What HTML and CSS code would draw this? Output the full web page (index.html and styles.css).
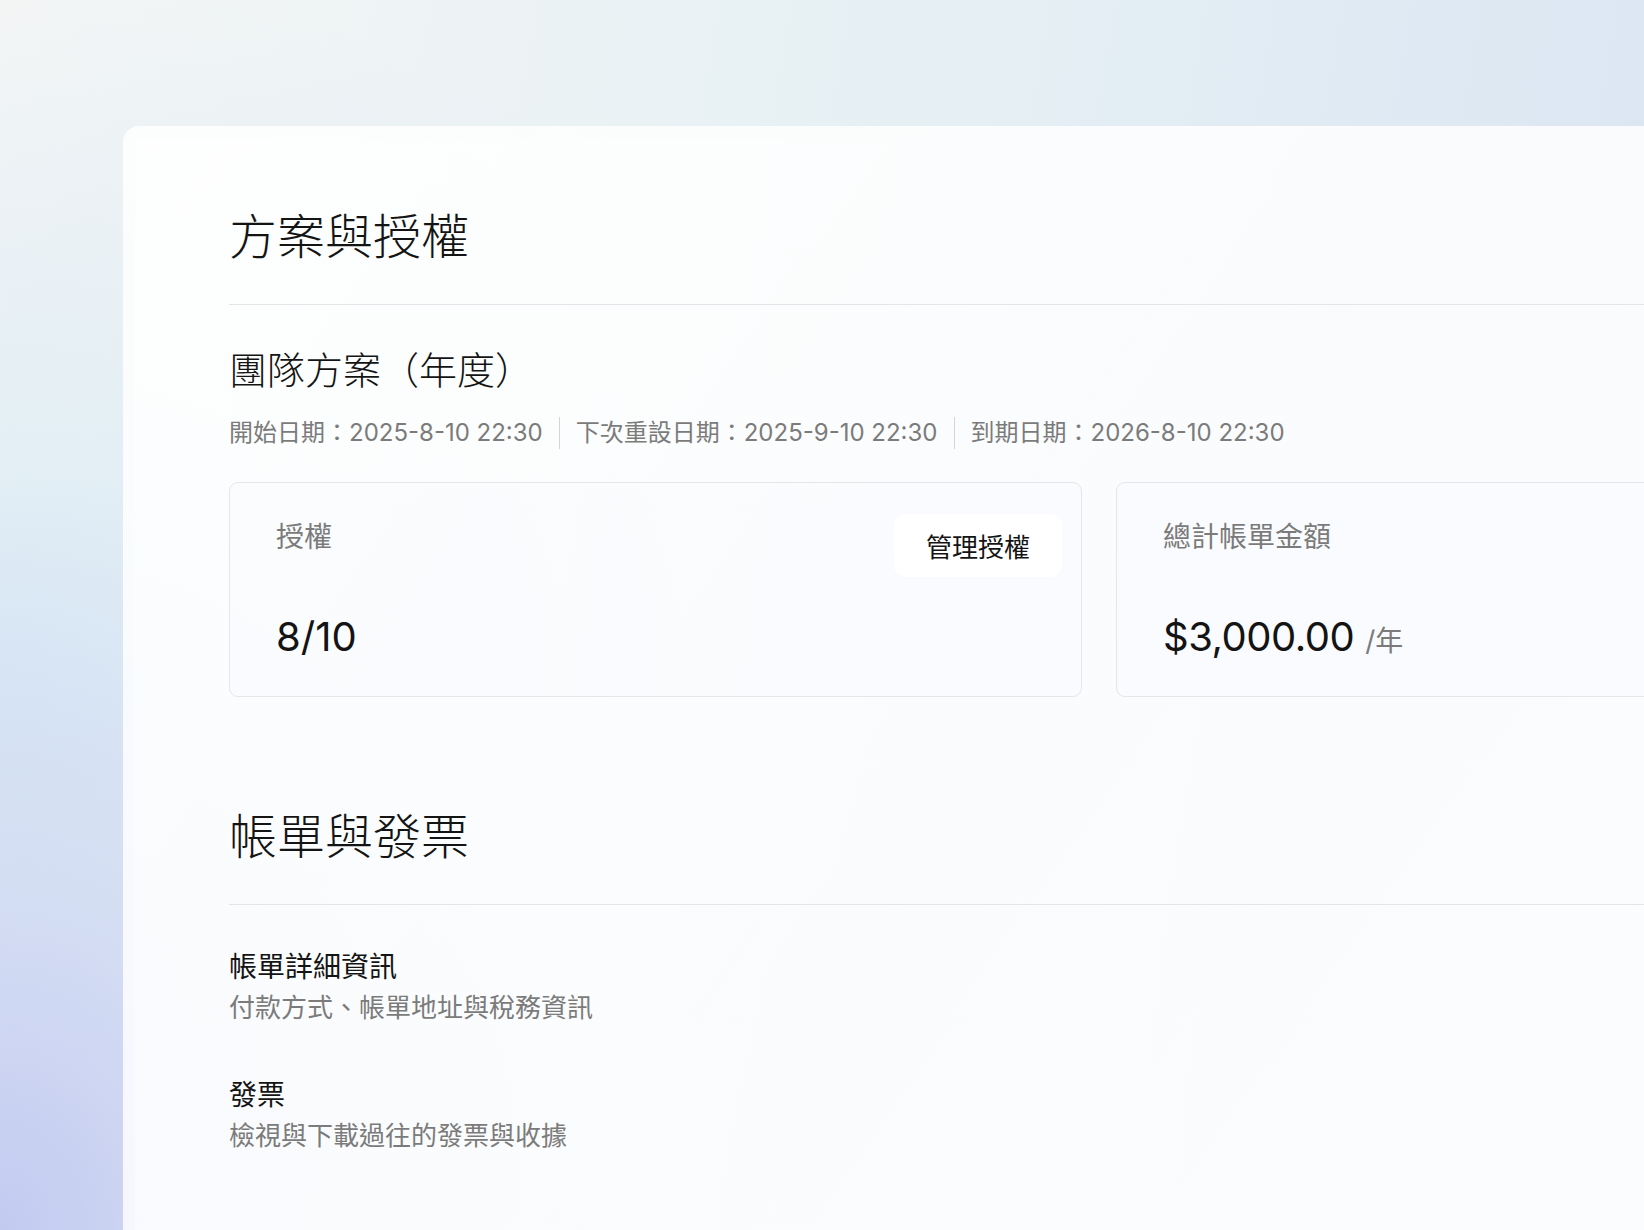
FILE: index.html
```html
<!DOCTYPE html>
<html lang="zh-Hant">
<head>
<meta charset="utf-8">
<title>方案與授權</title>
<link rel="stylesheet" href="styles.css">
</head>
<body>
<div class="panel">
  <div class="panel-inner">
    <section class="section">
      <h1 class="section-title">方案與授權</h1>
      <h2 class="plan-name">團隊方案（年度）</h2>
      <div class="dates">
        <span class="date">開始日期：2025-8-10 22:30</span>
        <span class="sep"></span>
        <span class="date">下次重設日期：2025-9-10 22:30</span>
        <span class="sep"></span>
        <span class="date">到期日期：2026-8-10 22:30</span>
      </div>
      <div class="stats">
        <div class="stat">
          <div class="stat-head">
            <span class="stat-label">授權</span>
            <button class="btn" type="button">管理授權</button>
          </div>
          <div class="stat-value">8/10</div>
        </div>
        <div class="stat">
          <div class="stat-head">
            <span class="stat-label">總計帳單金額</span>
          </div>
          <div class="stat-value"><span class="amount">$3,000.00</span><span class="unit">/年</span></div>
        </div>
      </div>
    </section>
    <section class="section billing">
      <h1 class="section-title">帳單與發票</h1>
      <div class="item">
        <div class="item-title">帳單詳細資訊</div>
        <div class="item-desc">付款方式、帳單地址與稅務資訊</div>
      </div>
      <div class="item">
        <div class="item-title">發票</div>
        <div class="item-desc">檢視與下載過往的發票與收據</div>
      </div>
    </section>
  </div>
</div>
</body>
</html>
```

FILE: styles.css
```css
html, body {
  margin: 0;
  padding: 0;
  height: 100%;
  overflow: hidden;
}
body {
  font-family: Inter, "Noto Sans CJK TC", sans-serif;
  color: #141414;
  background:
    radial-gradient(ellipse 620px 760px at 0% 100%, #c2caf1 0%, rgba(196,204,241,0.55) 40%, rgba(210,224,244,0) 100%),
    radial-gradient(ellipse 900px 700px at 0% 55%, #dcecf5 0%, rgba(220,236,245,0) 100%),
    linear-gradient(100deg, #f4f5f5 0%, #e7f1f4 45%, #d9e4f3 100%);
}
.panel {
  margin: 126px 0 0 123px;
  width: 1800px;
  height: 1200px;
  padding: 12px;
  box-sizing: border-box;
  border-radius: 16px;
  background: rgba(255, 255, 255, 0.82);
}
.panel-inner {
  height: 100%;
  box-sizing: border-box;
  padding: 68px 0 0 94px;
  border-radius: 8px;
  background:
    linear-gradient(125deg, rgba(255,255,255,0.55) 0%, rgba(250,251,253,0.4) 50%, rgba(255,255,255,0.55) 100%);
}
.section-title {
  margin: 0;
  font-size: 48px;
  line-height: 62px;
  font-weight: 300;
  color: #141414;
  padding-bottom: 36px;
  border-bottom: 1px solid #e4e5e8;
}
.plan-name {
  margin: 40px 0 0;
  font-size: 38px;
  line-height: 50px;
  font-weight: 300;
  color: #141414;
}
.dates {
  margin-top: 22px;
  display: flex;
  align-items: stretch;
  font-size: 24px;
  line-height: 32px;
  color: #7b7b7b;
}
.sep {
  width: 1px;
  background: #d4d5d8;
  margin: 0 16px;
}
.stats {
  margin-top: 33px;
  display: grid;
  grid-template-columns: 853px 853px;
  gap: 34px;
}
.stat {
  height: 215px;
  box-sizing: border-box;
  border: 1px solid #e5e6e9;
  border-radius: 9px;
  padding: 31px 19px 0 46px;
  background: rgba(250, 251, 253, 0.7);
}
.stat-head {
  height: 63px;
  display: flex;
  justify-content: space-between;
  align-items: flex-start;
}
.stat-label {
  margin-top: 2px;
  font-size: 28px;
  line-height: 42px;
  color: #7b7b7b;
}
.btn {
  height: 63px;
  padding: 0 32px;
  border: none;
  border-radius: 12px;
  background: #ffffff;
  font-family: Inter, "Noto Sans CJK TC", sans-serif;
  font-size: 26px;
  color: #141414;
  cursor: pointer;
}
.stat-value {
  margin-top: 36px;
  font-size: 40px;
  line-height: 48px;
  color: #141414;
}
.amount {
  letter-spacing: -0.5px;
}
.unit {
  margin-left: 11px;
  font-size: 28px;
  color: #7b7b7b;
}
.billing {
  margin-top: 109px;
}
.item {
  margin-top: 41px;
}
.item + .item {
  margin-top: 46px;
}
.item-title {
  font-size: 28px;
  line-height: 42px;
  color: #141414;
}
.item-desc {
  font-size: 26px;
  line-height: 40px;
  color: #7b7b7b;
}
```
